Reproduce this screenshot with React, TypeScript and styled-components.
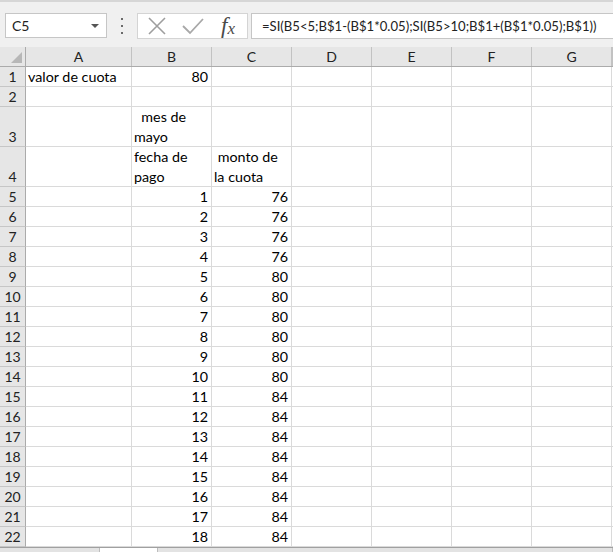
import { FC } from 'react'
import styled, { createGlobalStyle } from 'styled-components'

const GlobalStyle = createGlobalStyle`
  html, body {
    margin: 0;
    padding: 0;
    background: #ffffff;
  }
  * {
    box-sizing: border-box;
  }
`

const COLUMNS = ['A', 'B', 'C', 'D', 'E', 'F', 'G']
const TEMPLATE = '26px 106px repeat(6, 80px) 1fr'

type Align = 'left' | 'right'

interface CellData {
  lines: string[]
  align?: Align
}

interface RowData {
  n: number
  height: number
  cells: Record<string, CellData>
}

const amounts = [76, 76, 76, 76, 80, 80, 80, 80, 80, 80, 84, 84, 84, 84, 84, 84, 84, 84]

const rows: RowData[] = [
  {
    n: 1,
    height: 20,
    cells: {
      A: { lines: ['valor de cuota'] },
      B: { lines: ['80'], align: 'right' },
    },
  },
  { n: 2, height: 20, cells: {} },
  { n: 3, height: 40, cells: { B: { lines: ['  mes de', 'mayo'] } } },
  {
    n: 4,
    height: 40,
    cells: {
      B: { lines: ['fecha de', 'pago'] },
      C: { lines: [' monto de', 'la cuota'] },
    },
  },
  ...amounts.map((v, i) => ({
    n: i + 5,
    height: 20,
    cells: {
      B: { lines: [String(i + 1)], align: 'right' as Align },
      C: { lines: [String(v)], align: 'right' as Align },
    },
  })),
]

const App: FC = () => {
  return (
    <>
      <GlobalStyle />
      <Window>
        <FormulaBar>
          <NameBox>
            <span>C5</span>
            <DropArrow />
          </NameBox>
          <Grip>
            <i />
            <i />
            <i />
          </Grip>
          <ButtonBox>
            <svg width="20" height="18" viewBox="0 0 20 18">
              <path d="M2 1 L18 17 M18 1 L2 17" stroke="#9e9e9e" strokeWidth="1.6" fill="none" />
            </svg>
            <svg width="22" height="18" viewBox="0 0 22 18">
              <path d="M1 9 L8 16 L21 2" stroke="#a8a8a8" strokeWidth="1.8" fill="none" />
            </svg>
            <Fx>
              f<sub>x</sub>
            </Fx>
          </ButtonBox>
          <FormulaInput>=SI(B5&lt;5;B$1-(B$1*0.05);SI(B5&gt;10;B$1+(B$1*0.05);B$1))</FormulaInput>
        </FormulaBar>

        <HeaderRow>
          <Corner>
            <svg width="11" height="11" viewBox="0 0 11 11">
              <path d="M11 0 L11 11 L0 11 Z" fill="#b7b7b7" />
            </svg>
          </Corner>
          {COLUMNS.map((c) => (
            <ColHeader key={c}>{c}</ColHeader>
          ))}
          <ColHeader />
        </HeaderRow>

        {rows.map((r) => (
          <Row key={r.n} $height={r.height}>
            <RowHeader>{r.n}</RowHeader>
            {COLUMNS.map((c) => {
              const cell = r.cells[c]
              return (
                <Cell key={c} $align={cell?.align ?? 'left'}>
                  {cell?.lines.map((l, i) => (
                    <Line key={i}>{l}</Line>
                  ))}
                </Cell>
              )
            })}
            <Cell $align="left" />
          </Row>
        ))}

        <ScrollStrip>
          <StripGray $w={100} />
          <StripTab />
          <StripGray />
        </ScrollStrip>
      </Window>
    </>
  )
}

const Window = styled.div`
  width: 613px;
  height: 552px;
  overflow: hidden;
  font-family: Lato, 'Liberation Sans', sans-serif;
  font-size: 14.3px;
  color: #000;
  background: #fff;
`

const FormulaBar = styled.div`
  height: 47px;
  display: flex;
  align-items: center;
  padding: 2px 0 0 5px;
  background: #f0f0f0;
  border-top: 2px solid #d6d6d6;
`

const NameBox = styled.div`
  width: 102px;
  height: 25px;
  background: #fff;
  border: 1px solid #c6c6c6;
  display: flex;
  align-items: center;
  justify-content: space-between;
  padding: 0 7px 0 6px;
  font-size: 14px;
  color: #222;
`

const DropArrow = styled.span`
  width: 0;
  height: 0;
  border-left: 4px solid transparent;
  border-right: 4px solid transparent;
  border-top: 4px solid #555;
`

const Grip = styled.div`
  width: 30px;
  height: 16px;
  display: flex;
  flex-direction: column;
  align-items: center;
  justify-content: space-between;
  i {
    width: 2px;
    height: 2px;
    background: #6a6a6a;
  }
`

const ButtonBox = styled.div`
  width: 111px;
  height: 26px;
  background: #fff;
  border: 1px solid #d4d4d4;
  display: flex;
  align-items: center;
  padding: 0 0 0 9px;
  gap: 15px;
`

const Fx = styled.span`
  font-family: 'Liberation Serif', serif;
  font-style: italic;
  font-size: 23px;
  color: #4a4a4a;
  margin-left: 2px;
  line-height: 1;
  sub {
    font-size: 17px;
    vertical-align: baseline;
    position: relative;
    top: 1px;
  }
`

const FormulaInput = styled.div`
  flex: 1;
  height: 26px;
  margin-left: 3px;
  background: #fff;
  border: 1px solid #c6c6c6;
  border-right: none;
  display: flex;
  align-items: center;
  padding-left: 10px;
  white-space: nowrap;
  overflow: hidden;
  font-size: 13.1px;
  color: #222;
`

const HeaderRow = styled.div`
  display: grid;
  grid-template-columns: ${TEMPLATE};
  height: 20px;
  background: #e6e6e6;
  border-bottom: 1px solid #ababab;
`

const Corner = styled.div`
  border-right: 1px solid #ababab;
  display: flex;
  align-items: flex-end;
  justify-content: flex-end;
  padding: 0 3px 3px 0;
`

const ColHeader = styled.div`
  border-right: 1px solid #c2c2c2;
  display: flex;
  align-items: center;
  justify-content: center;
  font-size: 14px;
  color: #222;
`

const Row = styled.div<{ $height: number }>`
  display: grid;
  grid-template-columns: ${TEMPLATE};
  height: ${(p) => p.$height}px;
`

const RowHeader = styled.div`
  background: #e6e6e6;
  border-right: 1px solid #ababab;
  border-bottom: 1px solid #c6c6c6;
  display: flex;
  align-items: flex-end;
  justify-content: center;
  line-height: 19px;
  font-size: 14px;
  color: #222;
`

const Cell = styled.div<{ $align: Align }>`
  border-right: 1px solid #dadada;
  border-bottom: 1px solid #dadada;
  display: flex;
  flex-direction: column;
  justify-content: flex-end;
  align-items: ${(p) => (p.$align === 'right' ? 'flex-end' : 'flex-start')};
  padding: 0 3px 0 2px;
  overflow: hidden;
`

const Line = styled.span`
  line-height: 19.5px;
  white-space: pre;
`

const ScrollStrip = styled.div`
  height: 6px;
  display: flex;
  border-top: 1px solid #a0a0a0;
`

const StripGray = styled.div<{ $w?: number }>`
  ${(p) => (p.$w ? `width: ${p.$w}px;` : 'flex: 1;')}
  background: #e3e3e3;
  border-right: 1px solid #bdbdbd;
`

const StripTab = styled.div`
  width: 58px;
  background: #fff;
  border-right: 1px solid #bdbdbd;
`

export default App
